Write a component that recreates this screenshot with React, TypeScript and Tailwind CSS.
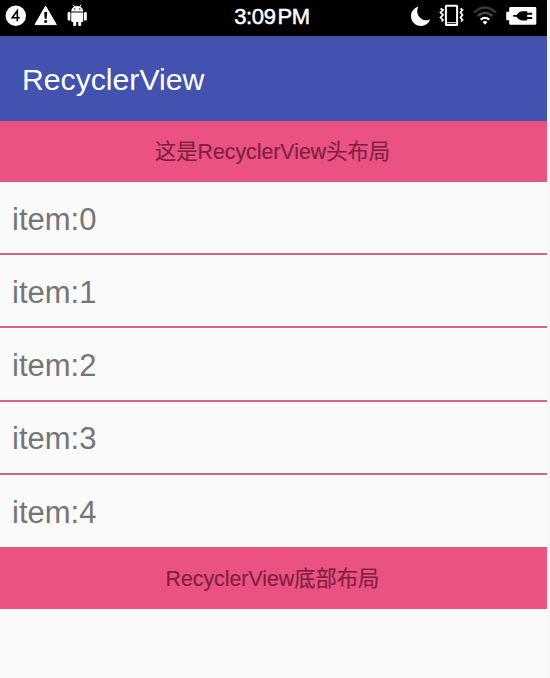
const sans = "font-['Liberation_Sans','Noto_Sans_CJK_SC',sans-serif]";

function LeftIcons() {
  return (
    <svg width="100" height="36" viewBox="0 0 100 36" fill="#fff" className="shrink-0">
      <circle cx="15.8" cy="15.8" r="10.2" />
      <path d="M17.3 21.2v-10.4L12.2 17.7h7.6" fill="none" stroke="#000" strokeWidth="1.6" />
      <path d="M45.6 6.2 56.3 24.6H35z" strokeLinejoin="round" stroke="#fff" strokeWidth="1" />
      <path d="M44.2 12h3l-.5 6.8h-2zM44.3 20.2h2.8v2.6h-2.8z" fill="#000" />
      <path d="M71.2 11.4c.2-3.2 2.6-5.4 6-5.4s5.8 2.200 6 5.400z" />
      <path d="m73.2 4.6 1.600 2.400M81.200 4.600l-1.600 2.400" stroke="#fff" strokeWidth="1" />
      <circle cx="74.7" cy="9" r=".7" fill="#000" />
      <circle cx="79.8" cy="9" r=".7" fill="#000" />
      <path d="M71.2 12.400h12v8.600q0 1-1 1h-1v3q0 1-1.500 1t-1.500-1v-3h-2v3q0 1-1.500 1t-1.500-1v-3h-1q-1 0-1-1z" />
      <rect x="67.6" y="12" width="2.800" height="8.600" rx="1.200" />
      <rect x="84" y="12" width="2.800" height="8.600" rx="1.200" />
    </svg>
  );
}

function RightIcons() {
  return (
    <svg width="147" height="36" viewBox="400 0 147 36" fill="none" className="shrink-0">
      <path d="M418.5 6.500A9.900 9.900 0 1 0 430.200 19.300A9.100 9.100 0 0 1 418.500 6.500z" fill="#fff" />
      <rect x="445.9" y="5.700" width="11.200" height="19.400" rx=".5" stroke="#fff" strokeWidth="2" />
      <path d="M447 22.700h9" stroke="#fff" strokeWidth="1" />
      <path d="m440.500 8.500 2.500 1.500-2.500 2.500 2.500 2.500-2.500 2.500 2.500 2.500-1.500 1.500M460.500 8.500l2 1.500-2 2.500 2 2.500-2 2.500 2 2.500-1.500 1.500" stroke="#fff" strokeWidth="1.700" />
      <path d="M474.200 12.500q10.800-10 21.600 0" stroke="#383838" strokeWidth="2.500" />
      <path d="M477.600 16q7.400-6.500 14.800 0" stroke="#484848" strokeWidth="2.500" />
      <path d="M480.700 19.700q4.300-3.600 8.600 0" stroke="#fff" strokeWidth="2.300" />
      <path d="m482.600 22 2.400 2.800 2.400-2.800q-2.400-1.800-4.800 0z" fill="#fff" />
      <path d="M510.500 7H535q1.300 0 1.300 1.300v15.200q0 1.300-1.300 1.300h-24.500q-1.300 0-1.300-1.300v-3.300h-2q-1 0-1-1v-6.500q0-1 1-1h2V8.300q0-1.300 1.300-1.300z" fill="#fff" />
      <path d="M513.200 15h3.500q2-3.800 6-3.800h4.500v1.500h5v2h-5v2.400h5v2h-5v1.500h-4.500q-4 0-6-3.800h-3.500z" fill="#000" />
    </svg>
  );
}

function Banner({ text, className }: { text: string; className: string }) {
  return (
    <div className={`flex shrink-0 items-center justify-center bg-[#eb5281] pr-[2px] text-[21.3px] leading-none whitespace-nowrap text-[#811f43] [-webkit-text-stroke:0.2px_#811f43] ${className}`}>
      {text}
    </div>
  );
}

export default function App() {
  return (
    <div className={`h-[678px] w-[550px] overflow-hidden bg-[#f7f7f8] ${sans}`}>
      <div className="flex h-full w-[547px] flex-col bg-[#fafafa]">
        <header className="flex h-9 shrink-0 items-start justify-between bg-black">
          <LeftIcons />
          <div className="flex gap-[2px] pt-[6px] pl-[44px] text-[22px] leading-[22px] text-white [-webkit-text-stroke:0.5px_white]">
            <span className="tracking-[-0.4px]">3:09</span>
            <span className="tracking-[-0.4px]">PM</span>
          </div>
          <RightIcons />
        </header>
        <div className="flex h-[85px] shrink-0 items-center bg-[#4252ae] pt-[3px] pl-[22px] text-[30.2px] leading-none text-white">
          RecyclerView
        </div>
        <Banner text="这是RecyclerView头布局" className="h-[61px] pt-[2px]" />
        <ul className="shrink-0">
          {[0, 1, 2, 3, 4].map((n) => (
            <li
              key={n}
              className="flex h-[73.2px] items-center border-b-2 border-[#d7608c] pt-[3px] pl-[12px] text-[31px] leading-none text-[#757575] last:h-[72.2px] last:border-b-0"
            >
              item:{n}
            </li>
          ))}
        </ul>
        <Banner text="RecyclerView底部布局" className="h-[62px] pt-[4px]" />
      </div>
    </div>
  );
}
